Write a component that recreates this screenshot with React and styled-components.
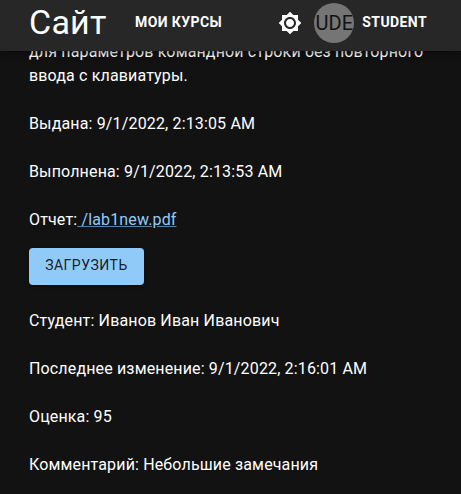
import React from "react";
import styled, { createGlobalStyle } from "styled-components";

const GlobalStyle = createGlobalStyle`
  *, *::before, *::after { box-sizing: border-box; }
  body {
    margin: 0;
    background: #121212;
    color: #fff;
    font-family: Roboto, "Liberation Sans", sans-serif;
    font-size: 16px;
    line-height: 24px;
    letter-spacing: 0.15px;
  }
`;

const Page = styled.div`
  height: 494px;
  overflow: hidden;
`;

const AppBar = styled.header`
  position: relative;
  z-index: 1;
  display: flex;
  align-items: center;
  height: 51px;
  padding: 0 34px 6px 29px;
  background: #272727;
  box-shadow: 0 2px 4px -1px rgba(0, 0, 0, 0.2), 0 4px 5px rgba(0, 0, 0, 0.14),
    0 1px 10px rgba(0, 0, 0, 0.12);
`;

const Brand = styled.h1`
  margin: 0;
  width: 106px;
  padding-bottom: 2px;
  font-size: 34px;
  font-weight: 400;
  line-height: 42px;
  letter-spacing: 0.25px;
`;

const NavLink = styled.a`
  font-size: 14px;
  font-weight: 700;
  letter-spacing: 0.4px;
  line-height: 24px;
  padding-bottom: 2px;
  white-space: nowrap;
  text-transform: uppercase;
`;

const Account = styled.div`
  display: flex;
  align-items: center;
  gap: 8px;
  margin-left: auto;
`;

const ThemeIcon = styled.svg`
  width: 24px;
  height: 24px;
  margin-right: 4px;
  fill: #fff;
`;

const Avatar = styled.div`
  display: flex;
  align-items: center;
  justify-content: center;
  width: 40px;
  height: 40px;
  border-radius: 50%;
  overflow: hidden;
  background: #757575;
  color: #121212;
  font-size: 20px;
  line-height: 1;
`;

const Content = styled.main`
  padding: 0 29px;
  margin-top: -11px;
`;

const Paragraph = styled.p`
  margin: 0 0 24px;
`;

const ReportLine = styled(Paragraph)`
  margin-bottom: 16px;
`;

const FileLink = styled.a`
  color: #90caf9;
  text-decoration: underline;
  text-decoration-color: rgba(144, 202, 249, 0.6);
  white-space: pre;
`;

const UploadButton = styled.button`
  display: block;
  width: 115px;
  height: 37px;
  margin: 0 0 24px;
  padding: 0 0 3px;
  border: 0;
  border-radius: 4px;
  background: #90caf9;
  color: rgba(0, 0, 0, 0.87);
  font: 400 14px/24px Roboto, sans-serif;
  letter-spacing: 0.5px;
  text-transform: uppercase;
  box-shadow: 0 3px 1px -2px rgba(0, 0, 0, 0.2), 0 2px 2px rgba(0, 0, 0, 0.14),
    0 1px 5px rgba(0, 0, 0, 0.12);
`;

export default function App() {
  return (
    <Page>
      <GlobalStyle />
      <AppBar>
        <Brand>Сайт</Brand>
        <NavLink>Мои курсы</NavLink>
        <Account>
          <ThemeIcon viewBox="0 0 24 24">
            <path d="M20 8.69V4h-4.69L12 .69 8.69 4H4v4.69L.69 12 4 15.31V20h4.69L12 23.31 15.31 20H20v-4.69L23.31 12 20 8.69zM12 18c-3.31 0-6-2.69-6-6s2.69-6 6-6 6 2.69 6 6-2.69 6-6 6zm0-10c-2.21 0-4 1.79-4 4s1.79 4 4 4 4-1.79 4-4-1.79-4-4-4z" />
          </ThemeIcon>
          <Avatar>UDE</Avatar>
          <NavLink>Student</NavLink>
        </Account>
      </AppBar>
      <Content>
        <Paragraph>
          для параметров командной строки без повторного
          <br />
          ввода с клавиатуры.
        </Paragraph>
        <Paragraph>Выдана: 9/1/2022, 2:13:05 AM</Paragraph>
        <Paragraph>Выполнена: 9/1/2022, 2:13:53 AM</Paragraph>
        <ReportLine>
          Отчет:<FileLink> /lab1new.pdf</FileLink>
        </ReportLine>
        <UploadButton>Загрузить</UploadButton>
        <Paragraph>Студент: Иванов Иван Иванович</Paragraph>
        <Paragraph>Последнее изменение: 9/1/2022, 2:16:01 AM</Paragraph>
        <Paragraph>Оценка: 95</Paragraph>
        <Paragraph>Комментарий: Небольшие замечания</Paragraph>
      </Content>
    </Page>
  );
}
